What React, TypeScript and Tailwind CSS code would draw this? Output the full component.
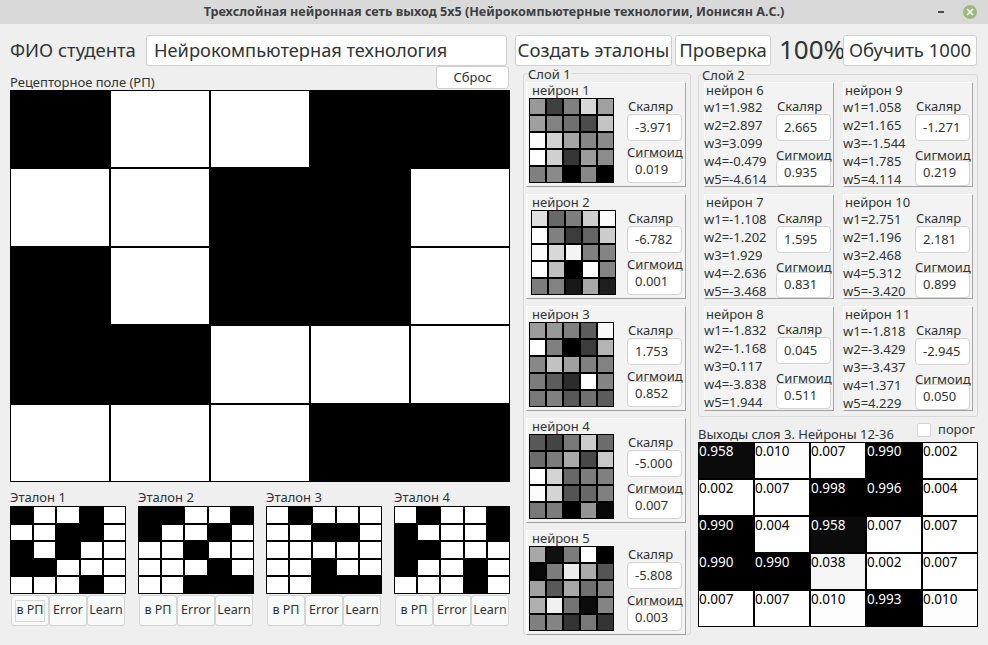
const B = 1, W = 0;
const mainGrid = [
  [B, W, W, B, B],
  [W, W, B, B, W],
  [B, W, B, B, W],
  [B, B, W, W, W],
  [W, W, W, B, B],
];
const etalons = [
  [[B, W, W, B, W], [W, W, B, B, W], [B, W, B, W, W], [B, B, W, W, W], [W, W, W, B, W]],
  [[B, B, W, W, B], [B, W, W, B, W], [W, W, B, W, W], [W, W, W, B, W], [W, W, B, B, B]],
  [[W, B, W, W, W], [W, W, B, B, W], [W, W, W, W, W], [W, W, B, W, W], [W, W, B, B, B]],
  [[W, B, W, W, B], [B, W, W, W, B], [B, B, W, W, W], [B, W, W, B, W], [W, W, W, B, W]],
];
const layer1 = [
  { n: 1, s: "-3.971", o: "0.019", ml: 0, g: [0x99, 0x40, 0x80, 0xd8, 0xa0, 0x9f, 0x82, 0x70, 0x4c, 0xc4, 0xfb, 0xd2, 0xa4, 0x86, 0x8a, 0xff, 0xd0, 0x36, 0x9c, 0x8c, 0x80, 0x8a, 0x00, 0x88, 0x00] },
  { n: 2, s: "-6.782", o: "0.001", ml: 2, g: [0xe0, 0x68, 0x7e, 0xce, 0xfa, 0xff, 0x80, 0x3c, 0x64, 0xcc, 0xfa, 0xd8, 0xf4, 0x80, 0x84, 0xff, 0xc0, 0x00, 0xfe, 0x84, 0x7c, 0x82, 0x18, 0xa8, 0x1e] },
  { n: 3, s: "1.753", o: "0.852", ml: 0, g: [0x9c, 0x98, 0x80, 0x5c, 0xf8, 0xff, 0x80, 0x00, 0x3c, 0xb4, 0x88, 0xc2, 0xa0, 0x80, 0x82, 0x7c, 0x5c, 0x2c, 0xff, 0x84, 0x78, 0x80, 0x58, 0x70, 0x5c] },
  { n: 4, s: "-5.000", o: "0.007", ml: 0, g: [0x58, 0x44, 0x78, 0xcc, 0x6c, 0x6c, 0x7c, 0xa8, 0x48, 0xc8, 0xff, 0xd4, 0x68, 0x7c, 0x80, 0xfc, 0xd4, 0x54, 0x68, 0x80, 0x78, 0x7c, 0x00, 0x94, 0x08] },
  { n: 5, s: "-5.808", o: "0.003", ml: 0, g: [0xa8, 0x10, 0x7c, 0xff, 0x00, 0x08, 0x7c, 0xec, 0xac, 0x54, 0xa0, 0x58, 0xa8, 0x70, 0x80, 0xb0, 0xf0, 0x74, 0x0c, 0x84, 0x80, 0x84, 0x34, 0x78, 0x34] },
];
const layer2 = [
  [
    { n: 6, w: ["1.982", "2.897", "3.099", "-0.479", "-4.614"], s: "2.665", o: "0.935", up: false },
    { n: 7, w: ["-1.108", "-1.202", "1.929", "-2.636", "-3.468"], s: "1.595", o: "0.831", up: false },
    { n: 8, w: ["-1.832", "-1.168", "0.117", "-3.838", "1.944"], s: "0.045", o: "0.511", up: true },
  ],
  [
    { n: 9, w: ["1.058", "1.165", "-1.544", "1.785", "4.114"], s: "-1.271", o: "0.219", up: false },
    { n: 10, w: ["2.751", "1.196", "2.468", "5.312", "-3.420"], s: "2.181", o: "0.899", up: false },
    { n: 11, w: ["-1.818", "-3.429", "-3.437", "1.371", "4.229"], s: "-2.945", o: "0.050", up: false },
  ],
];
const outputs = [
  ["0.958", "0.010", "0.007", "0.990", "0.002"],
  ["0.002", "0.007", "0.998", "0.996", "0.004"],
  ["0.990", "0.004", "0.958", "0.007", "0.007"],
  ["0.990", "0.990", "0.038", "0.002", "0.007"],
  ["0.007", "0.007", "0.010", "0.993", "0.010"],
];
const outputBg: Record<string, string> = { "0.958": "#0b0b0b", "0.038": "#f5f5f5", "0.010": "#fdfdfd" };

function Btn({ children, className }: { children: React.ReactNode; className: string }) {
  return (
    <div className={"flex items-center justify-center bg-white border border-[#cfcfcf] rounded-[3px] whitespace-nowrap " + className}>
      {children}
    </div>
  );
}

function Field({ children }: { children: React.ReactNode }) {
  return <div className="w-[55px] h-full flex items-center pl-[7px] bg-white border border-[#d4d4d4] rounded-[4px] text-[13px]">{children}</div>;
}

function BwGrid({ data, className }: { data: number[][]; className: string }) {
  return (
    <div className={"grid grid-cols-5 grid-rows-5 gap-[2px] p-px bg-black " + className}>
      {data.flat().map((v, i) => (
        <div key={i} className={v ? "bg-black" : "bg-white"} />
      ))}
    </div>
  );
}

function Card({ children, className }: { children: React.ReactNode; className: string }) {
  return (
    <div className={"shrink-0 h-[105px] bg-[#f3f3f3] border-t border-l border-t-white border-l-white border-b border-r border-b-[#a0a0a0] border-r-[#a8a8a8] " + className}>
      {children}
    </div>
  );
}

function Outputs({ s, o, labelGap }: { s: string; o: string; labelGap: string }) {
  return (
    <div className="flex flex-col w-[55px]">
      <div className="h-[16px] leading-[16px] whitespace-nowrap pl-px">Скаляр</div>
      <div className="h-[27px]"><Field>{s}</Field></div>
      <div className={"h-[16px] leading-[16px] whitespace-nowrap " + labelGap}>Сигмоид</div>
      <div className="h-[26px] -mt-[3px]"><Field>{o}</Field></div>
    </div>
  );
}

function Neuron1({ n, s, o, g, ml }: (typeof layer1)[number]) {
  return (
    <Card className="w-[160px]">
      <div className="h-[15px] leading-[15px] pl-[5px] whitespace-nowrap">нейрон {n}</div>
      <div className="flex">
        <div className={"grid grid-cols-5 grid-rows-5 gap-[2px] p-px bg-black w-[85px] h-[85px] " + (ml ? "ml-[4px] mr-[11px]" : "ml-[2px] mr-[13px]")}>
          {g.map((v, i) => (
            <div key={i} style={{ background: `rgb(${v},${v},${v})` }} />
          ))}
        </div>
        <Outputs s={s} o={o} labelGap="mt-[3px]" />
      </div>
    </Card>
  );
}

function Neuron2({ n, w, s, o, up }: (typeof layer2)[0][number]) {
  return (
    <Card className="w-[130px]">
      <div className="h-[15px] leading-[15px] pl-[1px] whitespace-nowrap">нейрон {n}</div>
      <div className={"flex -ml-px " + (up ? "-mt-px" : "")}>
        <div className="w-[72px] flex flex-col">
          {w.map((x, i) => (
            <div key={i} className="h-[18px] leading-[18px] whitespace-nowrap">w{i + 1}={x}</div>
          ))}
        </div>
        <Outputs s={s} o={o} labelGap="mt-[6px]" />
      </div>
    </Card>
  );
}

export default function App() {
  return (
    <div className="w-[988px] h-[645px] overflow-hidden bg-[#efefef] text-[#2e3436] text-[13px] font-['Noto_Sans',sans-serif] flex flex-col">
      <div className="relative h-[24px] bg-[#d9d9d9] flex items-center justify-center font-bold text-[12.6px] text-[#3c3f41]">
        <span>Трехслойная нейронная сеть выход 5x5 (Нейрокомпьютерные технологии, Ионисян А.С.)</span>
        <div className="absolute left-[938px] top-[11px] w-[6px] h-[2px] bg-[#4a4a4a]" />
        <div className="absolute left-[963px] top-[5px] w-[14px] h-[14px] rounded-full bg-[#9cb97c] flex items-center justify-center">
          <svg width="8" height="8" viewBox="0 0 8 8"><path d="M1 1l6 6M7 1l-6 6" stroke="#fff" strokeWidth="1.6" /></svg>
        </div>
      </div>

      <div className="flex items-center h-[32px] mt-[10px] pl-[10px] text-[18.5px]">
        <div className="w-[136px] whitespace-nowrap">ФИО студента</div>
        <div className="w-[361px] h-[31px] bg-white border border-[#cfcfcf] rounded-[3px] pl-[7px] flex items-center text-[18.25px]">Нейрокомпьютерная технология</div>
        <Btn className="w-[157px] h-[31px] ml-[8px]">Создать эталоны</Btn>
        <Btn className="w-[96px] h-[31px] ml-[3px]">Проверка</Btn>
        <div className="w-[64px] ml-[8px] text-[26px] overflow-hidden whitespace-nowrap -mt-[2px]">100%</div>
        <Btn className="w-[134px] h-[31px]">Обучить 1000</Btn>
      </div>

      <div className="flex pl-[10px]">
        <div className="w-[500px] flex flex-col">
          <div className="h-[24px] flex items-end justify-between">
            <span className="leading-[16px]">Рецепторное поле (РП)</span>
            <Btn className="w-[73px] h-[23px] mr-px mb-px">Сброс</Btn>
          </div>
          <BwGrid data={mainGrid} className="w-[500px] h-[392px]" />
          <div className="flex gap-[12px] mt-[7px]">
            {etalons.map((e, i) => (
              <div key={i} className="w-[116px] flex flex-col">
                <div className="h-[17px] leading-[17px]">Эталон {i + 1}</div>
                <BwGrid data={e} className="w-[116px] h-[88px]" />
                <div className="flex ml-px mt-px text-[12.5px]">
                  {["в РП", "Error", "Learn"].map((b, j) => (
                    <div key={b} className="w-[38px] h-[31px] flex items-center justify-center bg-[#f8f9f9] border border-[#d4d4d4] rounded-[3px]">
                      {i === 0 && j === 0 ? <span className="w-[30px] h-[22px] flex items-center justify-center border border-[#d8d8d8]">{b}</span> : b}
                    </div>
                  ))}
                </div>
              </div>
            ))}
          </div>
        </div>

        <div className="relative w-[168px] h-[562px] ml-[13px] mt-[7px] border border-[#d8d8d8] rounded-[3px] pl-[2px] pt-[8px] flex flex-col gap-[7px]">
          <div className="absolute left-[3px] -top-[7px] leading-[14px] bg-[#efefef] px-px">Слой 1</div>
          {layer1.map((x) => <Neuron1 key={x.n} {...x} />)}
        </div>

        <div className="ml-[7px] mt-[8px] w-[280px] flex flex-col">
          <div className="relative w-[280px] h-[343px] border border-[#d8d8d8] rounded-[3px] pl-[5px] pt-[7px] flex gap-[9px]">
            <div className="absolute left-[2px] -top-[7px] leading-[14px] bg-[#efefef] px-px">Слой 2</div>
            {layer2.map((col, i) => (
              <div key={i} className="flex flex-col gap-[7px]">
                {col.map((x) => <Neuron2 key={x.n} {...x} />)}
              </div>
            ))}
          </div>
          <div className="h-[25px] flex items-end relative">
            <span className="leading-[16px]">Выходы слоя 3. Нейроны 12-36</span>
            <div className="absolute left-[219px] top-[6px] w-[14px] h-[14px] bg-white border border-[#d4d4d4] rounded-[2px]" />
            <span className="absolute left-[240px] top-[4px] leading-[16px]">порог</span>
          </div>
          <div className="w-[280px] h-[185px] grid grid-cols-5 grid-rows-5 gap-[2px] p-px bg-black text-[13.5px]">
            {outputs.flat().map((v, i) => {
              const dark = parseFloat(v) > 0.5;
              return (
                <div key={i} className={"leading-[16px] " + (dark ? "text-white" : "text-black")} style={{ background: outputBg[v] ?? (dark ? "#000" : "#fff") }}>
                  {v}
                </div>
              );
            })}
          </div>
        </div>
      </div>
    </div>
  );
}
